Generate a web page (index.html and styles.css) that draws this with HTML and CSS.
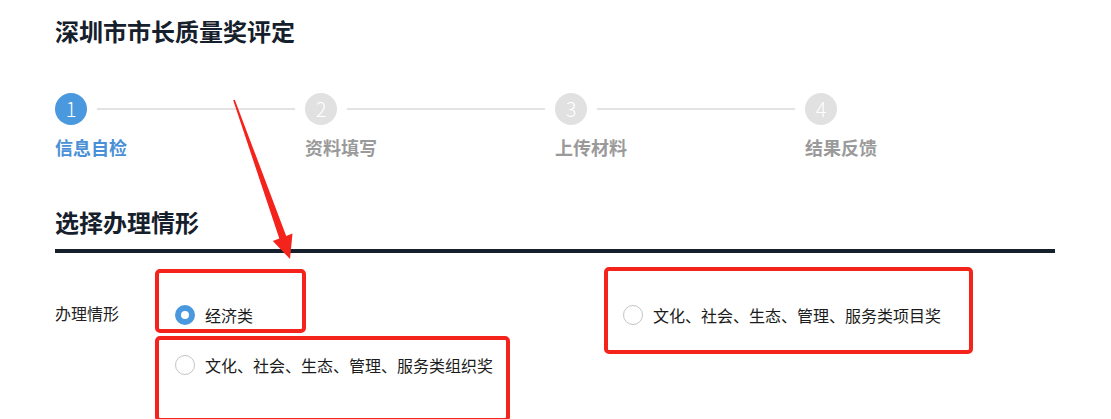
FILE: index.html
```html
<!DOCTYPE html>
<html lang="zh-CN">
<head>
<meta charset="utf-8">
<title>深圳市市长质量奖评定</title>
<link rel="stylesheet" href="styles.css">
</head>
<body>
<div class="page">
  <h1 class="title">深圳市市长质量奖评定</h1>

  <div class="steps">
    <div class="step active">
      <div class="step-head"><span class="step-dot">1</span><span class="step-line"></span></div>
      <div class="step-label">信息自检</div>
    </div>
    <div class="step">
      <div class="step-head"><span class="step-dot">2</span><span class="step-line"></span></div>
      <div class="step-label">资料填写</div>
    </div>
    <div class="step">
      <div class="step-head"><span class="step-dot">3</span><span class="step-line"></span></div>
      <div class="step-label">上传材料</div>
    </div>
    <div class="step last">
      <div class="step-head"><span class="step-dot">4</span></div>
      <div class="step-label">结果反馈</div>
    </div>
  </div>

  <h2 class="section-title">选择办理情形</h2>

  <div class="form-row">
    <div class="form-label">办理情形</div>
    <div class="options">
      <label class="option"><span class="radio checked"></span><span class="option-text">经济类</span></label>
      <label class="option"><span class="radio"></span><span class="option-text">文化、社会、生态、管理、服务类项目奖</span></label>
      <label class="option"><span class="radio"></span><span class="option-text">文化、社会、生态、管理、服务类组织奖</span></label>
    </div>
  </div>
</div>

<div class="annot annot-1"></div>
<div class="annot annot-2"></div>
<div class="annot annot-3"></div>
<svg class="arrow" width="1111" height="419" viewBox="0 0 1111 419">
  <polygon points="233.2,100.3 234.8,99.7 286.2,236 292.5,233.6 290,259 272.8,241 279.3,238.5" fill="#f4231c"/>
</svg>
</body>
</html>
```

FILE: styles.css
```css
* { box-sizing: border-box; }

body {
  margin: 0;
  background: #ffffff;
  font-family: "Noto Sans CJK SC", "Noto Sans", sans-serif;
  color: #1b1f26;
  position: relative;
  height: 419px;
  overflow: hidden;
}

.page {
  width: 1111px;
  padding: 15px 56px 0 55px;
}

.title {
  margin: 0;
  font-size: 24px;
  line-height: 32px;
  font-weight: 700;
  color: #16202c;
}

.steps {
  display: flex;
  margin-top: 46px;
}

.step {
  width: 250px;
}

.step.last {
  width: auto;
}

.step-head {
  display: flex;
  align-items: center;
}

.step-dot {
  width: 32px;
  height: 32px;
  border-radius: 50%;
  background: #e1e1e1;
  color: #ffffff;
  font-size: 20px;
  font-weight: 300;
  line-height: 32px;
  text-align: center;
  flex: none;
}

.step.active .step-dot {
  background: #4a98de;
}

.step-line {
  flex: 1;
  height: 2px;
  margin: 0 10px;
  background: #e3e3e3;
}

.step-label {
  margin-top: 10px;
  font-size: 18px;
  line-height: 24px;
  font-weight: 700;
  color: #9a9a9a;
}

.step.active .step-label {
  color: #4a90d6;
}

.section-title {
  margin: 47px 0 0;
  font-size: 24px;
  line-height: 32px;
  font-weight: 700;
  color: #16202c;
  padding-bottom: 11px;
  border-bottom: 4px solid #16202c;
}

.form-row {
  display: flex;
  margin-top: 47px;
}

.form-label {
  width: 120px;
  flex: none;
  font-size: 16px;
  line-height: 26px;
  color: #222;
}

.options {
  display: grid;
  grid-template-columns: 448px 400px;
  row-gap: 20px;
}

.option {
  display: flex;
  align-items: center;
  height: 30px;
  font-size: 16px;
  color: #1b1b1b;
}

.radio {
  width: 20px;
  height: 20px;
  border-radius: 50%;
  border: 1px solid #c4c4c4;
  background: #fff;
  margin-right: 10px;
  flex: none;
}

.radio.checked {
  border: 6px solid #4a98de;
}

.annot {
  position: absolute;
  border: 4px solid #f4231c;
  border-radius: 5px;
}

.annot-1 { left: 155px; top: 269px; width: 151px; height: 64px; }
.annot-2 { left: 155px; top: 336px; width: 355px; height: 86px; }
.annot-3 { left: 604px; top: 267px; width: 369px; height: 87px; }

.arrow {
  position: absolute;
  left: 0;
  top: 0;
}
```
